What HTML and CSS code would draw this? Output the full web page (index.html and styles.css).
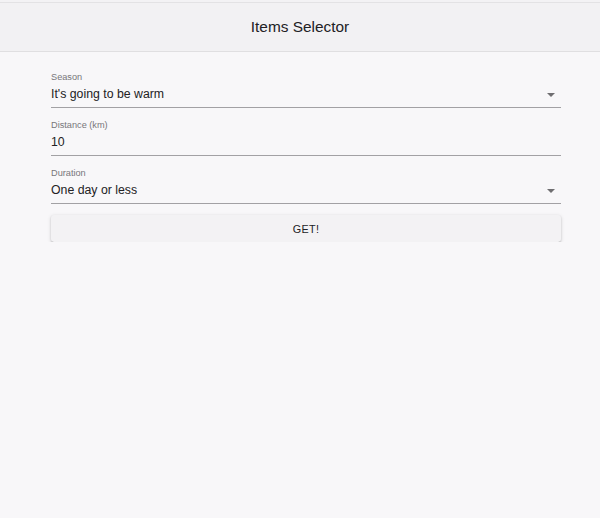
FILE: index.html
```html
<!DOCTYPE html>
<html lang="en">
<head>
<meta charset="utf-8">
<title>Items Selector</title>
<link rel="stylesheet" href="styles.css">
</head>
<body>
<div class="topstrip"></div>
<header class="appbar">
  <h1 class="title">Items Selector</h1>
</header>
<main class="form">
  <div class="field">
    <label class="label">Season</label>
    <div class="control">
      <span class="value">It's going to be warm</span>
      <svg class="arrow" width="8" height="4" viewBox="0 0 10 5"><path d="M0 0l5 5 5-5z" fill="currentColor"/></svg>
    </div>
  </div>
  <div class="field">
    <label class="label">Distance (km)</label>
    <div class="control">
      <span class="value">10</span>
    </div>
  </div>
  <div class="field">
    <label class="label">Duration</label>
    <div class="control">
      <span class="value">One day or less</span>
      <svg class="arrow" width="8" height="4" viewBox="0 0 10 5"><path d="M0 0l5 5 5-5z" fill="currentColor"/></svg>
    </div>
  </div>
  <button class="btn" type="button">Get!</button>
</main>
</body>
</html>
```
FILE: styles.css
```css
html, body {
  margin: 0;
  padding: 0;
  background: #f8f7f9;
  font-family: "Liberation Sans", Arial, sans-serif;
  color: #232224;
}
.topstrip {
  height: 2px;
  background: #f3f2f4;
  border-bottom: 1px solid #e3e2e4;
}
.appbar {
  height: 48px;
  background: #f2f1f3;
  border-bottom: 1px solid #e0dfe1;
  display: flex;
  align-items: center;
  justify-content: center;
}
.title {
  margin: 0;
  font-size: 15.4px;
  font-weight: 400;
  color: #222124;
}
.form {
  width: 510px;
  margin-left: 51px;
  padding-top: 20px;
  display: flex;
  flex-direction: column;
  gap: 12px;
}
.field {
  display: flex;
  flex-direction: column;
}
.label {
  font-size: 9.2px;
  line-height: 11px;
  color: #77767a;
}
.control {
  margin-top: 4px;
  display: flex;
  align-items: center;
  padding-bottom: 5px;
  border-bottom: 1px solid #a2a1a4;
  height: 15px;
}
.value {
  flex: 1;
  font-size: 12.3px;
  line-height: 15px;
  color: #232224;
}
.arrow {
  color: #6f6e71;
  margin-right: 6px;
}
.btn {
  margin-top: -1px;
  height: 27px;
  border: none;
  border-radius: 3px;
  background: #f3f2f4;
  font-family: inherit;
  font-size: 10.8px;
  letter-spacing: 0.3px;
  text-transform: uppercase;
  color: #222124;
  box-shadow: 0 2px 1px -1px rgba(0,0,0,0.25), 0 1px 2px 0 rgba(0,0,0,0.16), 0 1px 4px 0 rgba(0,0,0,0.12);
  padding: 0;
}
```
